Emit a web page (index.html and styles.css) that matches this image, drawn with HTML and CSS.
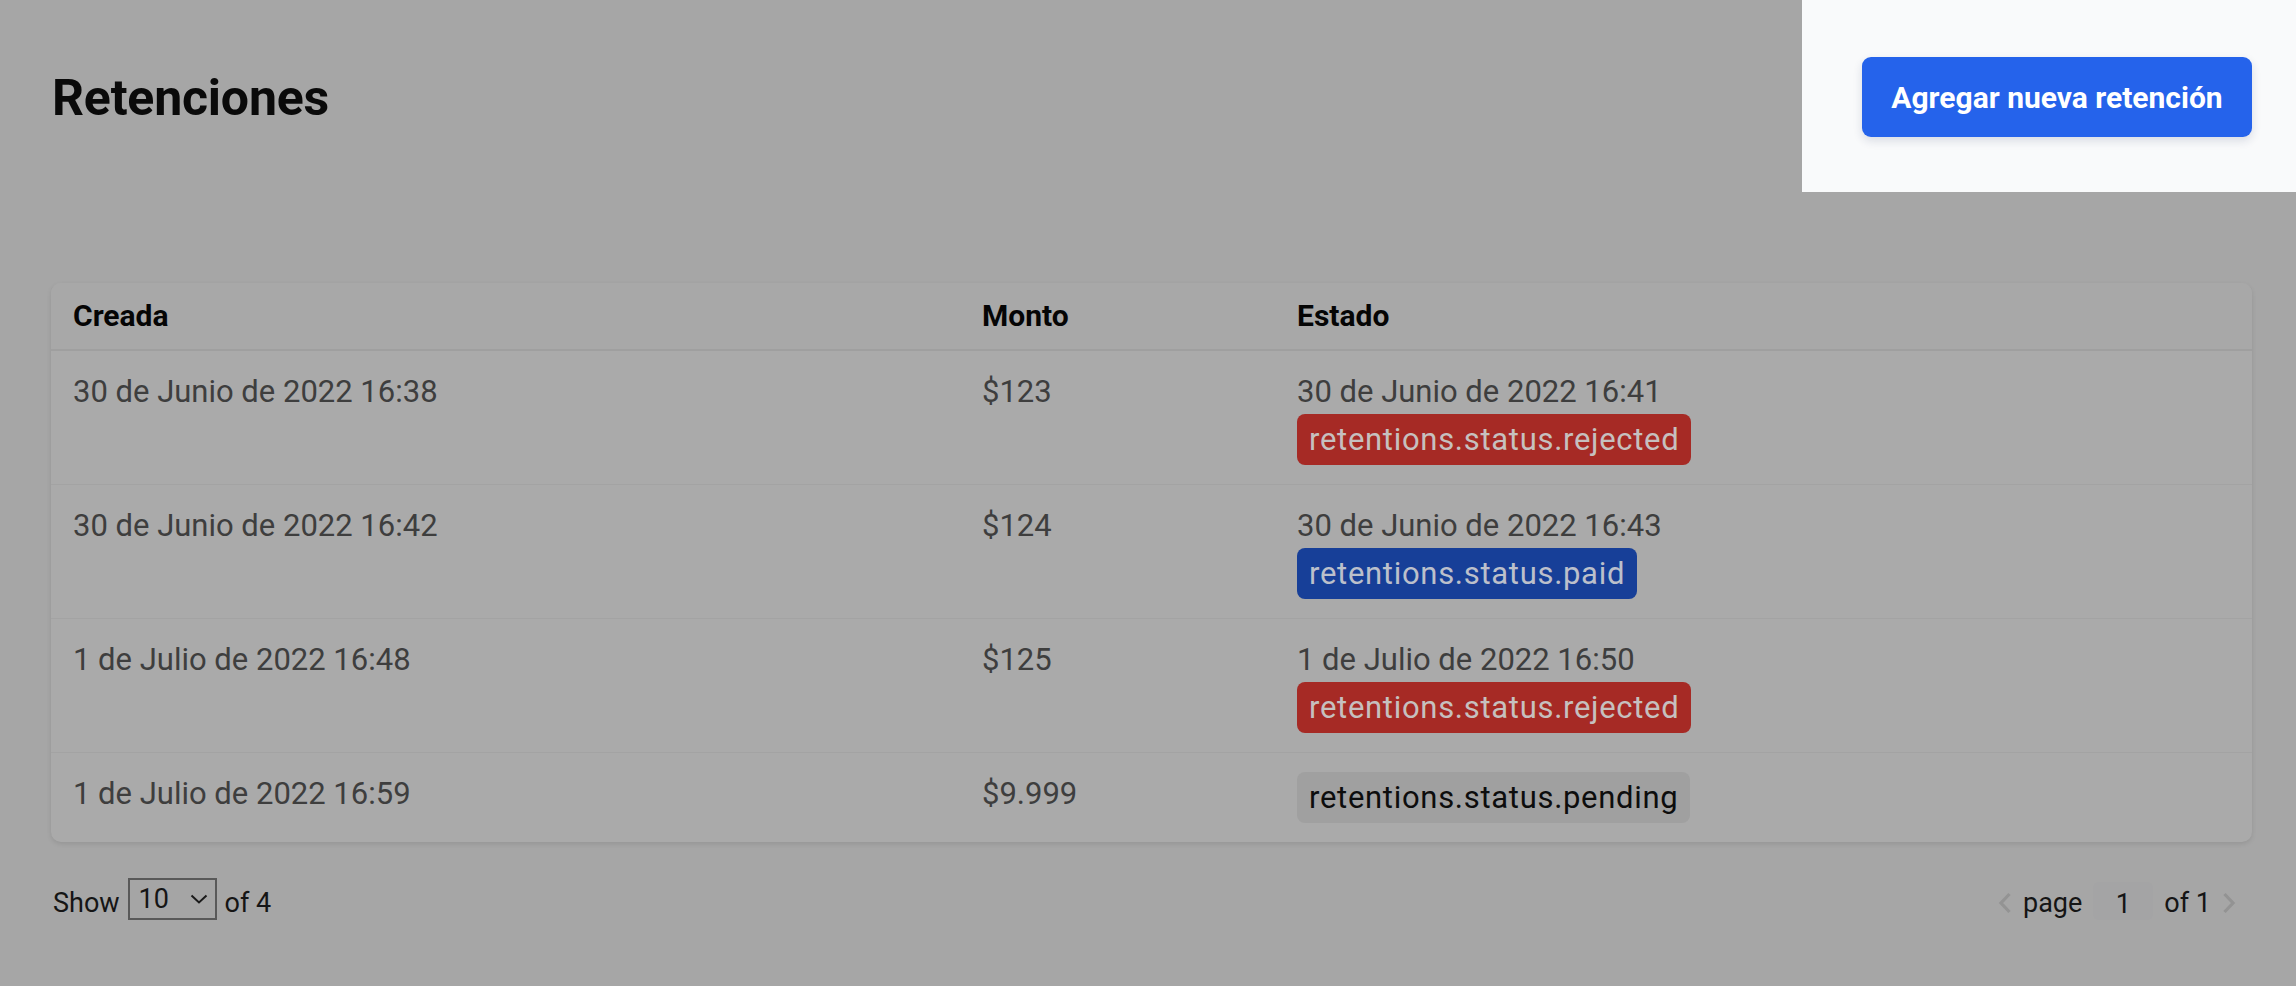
FILE: index.html
```html
<!DOCTYPE html>
<html lang="es">
<head>
<meta charset="utf-8">
<title>Retenciones</title>
<link rel="stylesheet" href="styles.css">
</head>
<body>
<div class="page">
  <header class="top">
    <h1 class="title">Retenciones</h1>
    <div class="spotlight">
      <button class="btn-primary" type="button">Agregar nueva retención</button>
    </div>
  </header>

  <div class="card">
    <table class="tbl">
      <colgroup>
        <col class="c1"><col class="c2"><col class="c3">
      </colgroup>
      <thead>
        <tr><th>Creada</th><th>Monto</th><th>Estado</th></tr>
      </thead>
      <tbody>
        <tr>
          <td>30 de Junio de 2022 16:38</td>
          <td>$123</td>
          <td><div class="when">30 de Junio de 2022 16:41</div><span class="badge rejected">retentions.status.rejected</span></td>
        </tr>
        <tr>
          <td>30 de Junio de 2022 16:42</td>
          <td>$124</td>
          <td><div class="when">30 de Junio de 2022 16:43</div><span class="badge paid">retentions.status.paid</span></td>
        </tr>
        <tr>
          <td>1 de Julio de 2022 16:48</td>
          <td>$125</td>
          <td><div class="when">1 de Julio de 2022 16:50</div><span class="badge rejected">retentions.status.rejected</span></td>
        </tr>
        <tr>
          <td>1 de Julio de 2022 16:59</td>
          <td>$9.999</td>
          <td><span class="badge pending">retentions.status.pending</span></td>
        </tr>
      </tbody>
    </table>
  </div>

  <footer class="pager">
    <div class="show">
      <span class="txt">Show</span>
      <span class="select-wrap">
        <select class="size-select">
          <option>10</option>
          <option>20</option>
          <option>50</option>
        </select>
        <svg class="chev-down" width="18" height="10" viewBox="0 0 18 10"><path d="M1.5 1.5 L9 8.5 L16.5 1.5" fill="none" stroke="#1a1a1a" stroke-width="2"/></svg>
      </span>
      <span class="txt">of 4</span>
    </div>
    <div class="pages">
      <svg class="chev" width="14" height="22" viewBox="0 0 14 22"><path d="M11.5 2 L3 11 L11.5 20" fill="none" stroke="#939393" stroke-width="3.2"/></svg>
      <span class="txt">page</span>
      <span class="page-box">1</span>
      <span class="txt">of 1</span>
      <svg class="chev" width="14" height="22" viewBox="0 0 14 22"><path d="M2.5 2 L11 11 L2.5 20" fill="none" stroke="#939393" stroke-width="3.2"/></svg>
    </div>
  </footer>
</div>
</body>
</html>
```

FILE: styles.css
```css
html, body {
  margin: 0;
  padding: 0;
}
body {
  background: #a6a6a6;
  font-family: Roboto, "Noto Sans", Arial, sans-serif;
  color: #3e3e3e;
  height: 986px;
  overflow: hidden;
}
.page {
  padding: 0 44px 0 51px;
}
.top {
  display: flex;
  justify-content: space-between;
  align-items: flex-start;
  height: 192px;
}
.title {
  margin: 68px 0 0 1px;
  font-size: 50px;
  line-height: 60px;
  font-weight: 700;
  color: #0a0a0a;
  letter-spacing: -0.2px;
}
.spotlight {
  background: #f9fafb;
  margin-right: -44px;
  padding: 57px 44px 55px 60px;
}
.btn-primary {
  display: block;
  width: 390px;
  height: 80px;
  border: 0;
  border-radius: 9px;
  background: #2563eb;
  color: #ffffff;
  font-family: Roboto, "Noto Sans", Arial, sans-serif;
  font-size: 30px;
  font-weight: 700;
  box-shadow: 0 4px 10px rgba(30, 40, 90, 0.14);
  padding: 0;
}
.card {
  margin-top: 91px;
  background: #aaaaaa;
  border-radius: 10px;
  box-shadow: 0 2px 5px rgba(0, 0, 0, 0.1);
  overflow: hidden;
}
.tbl {
  width: 100%;
  border-collapse: collapse;
  table-layout: fixed;
}
.c1 { width: 909px; }
.c2 { width: 315px; }
.tbl th {
  text-align: left;
  font-size: 30px;
  line-height: 44px;
  font-weight: 700;
  color: #050505;
  padding: 11px 22px;
  background: #a8a8a8;
  border-bottom: 2px solid #9f9f9f;
}
.tbl td {
  vertical-align: top;
  font-size: 31px;
  line-height: 44px;
  padding: 19px 22px;
  color: #3e3e3e;
  border-bottom: 1px solid #a3a3a3;
}
.tbl tbody tr:last-child td {
  border-bottom: 0;
}
.when {
  line-height: 44px;
}
.badge {
  display: inline-block;
  font-size: 31px;
  line-height: 43px;
  padding: 4px 12px;
  border-radius: 8px;
  letter-spacing: 0.7px;
}
.badge.rejected {
  background: #a62a25;
  color: #c6c0bf;
}
.badge.paid {
  background: #173f98;
  color: #bcc0cb;
}
.badge.pending {
  background: #a0a0a0;
  color: #0d0d0d;
}
.pager {
  margin-top: 36px;
  display: flex;
  justify-content: space-between;
  align-items: center;
  height: 42px;
  font-size: 27px;
  color: #151515;
}
.txt {
  padding-top: 7px;
}
.show {
  display: flex;
  align-items: center;
  gap: 8px;
  margin-left: 2px;
}
.select-wrap {
  position: relative;
  display: inline-block;
  width: 89px;
  height: 42px;
}
.size-select {
  appearance: none;
  -webkit-appearance: none;
  width: 89px;
  height: 42px;
  box-sizing: border-box;
  border: 2px solid #595959;
  border-radius: 0;
  background: #a5a5a5;
  font-family: Roboto, "Noto Sans", Arial, sans-serif;
  font-size: 27px;
  color: #151515;
  padding: 0 0 0 9px;
  margin: 0;
}
.chev-down {
  position: absolute;
  right: 9px;
  top: 16px;
  pointer-events: none;
}
.pages {
  display: flex;
  align-items: center;
  gap: 11px;
  margin-right: 16px;
}
.page-box {
  display: inline-block;
  box-sizing: content-box;
  width: 60px;
  height: 32px;
  line-height: 32px;
  padding-top: 6px;
  margin-top: 4px;
  text-align: center;
  background: #a4a4a5;
  border-radius: 6px;
}
.chev {
  display: block;
  margin-top: 8px;
}
```
